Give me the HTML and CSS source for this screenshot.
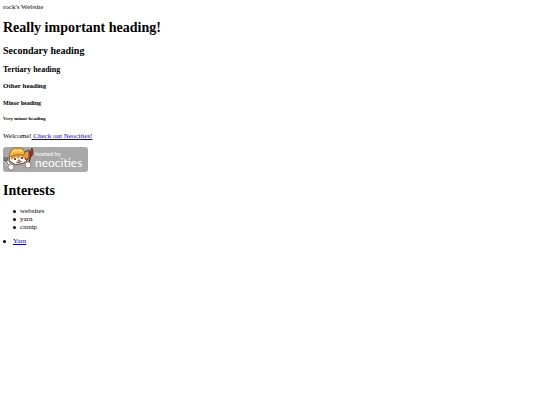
FILE: index.html
```html
<!DOCTYPE html>
<html>
  <head>
    <meta charset="UTF-8">
    <meta name="viewport" content="width=device-width, initial-scale=1">
    <title>rock's Website</title>
    <link rel="stylesheet" href="styles.css">
  </head>
  <body>
    rock's Website
    <h1>Really important heading!</h1>
    <h2>Secondary heading</h2>
    <h3>Tertiary heading</h3>
    <h4>Other heading</h4>
    <h5>Minor heading</h5>
    <h6>Very minor heading</h6>

    <p>Welcome!<a href="#neocities"> Check out Neocities!</a></p>

    <svg class="badge" id="neocities" viewBox="0 0 85 25" role="img" aria-label="Hosted by Neocities">
      <rect width="85" height="25" rx="3" fill="#a9a9a9"/>
      <!-- fork -->
      <path d="M3 14 8 21" stroke="#f4f4f4" stroke-width="3"/>
      <path d="M1 10 2 14 4 14 5 10M3 10 3 14 7 21" fill="none" stroke="#555" stroke-width="1"/>
      <!-- cat -->
      <path d="M7 8Q5 13 8 15 12 19 17 17 24 16 25 10L26 4 20 6Z" fill="#fff" stroke="#69422b" stroke-width="1"/>
      <path d="M20 6 26 3 26 11 23 13Z" fill="#f39a3e" stroke="#5b3a27" stroke-width="1"/>
      <path d="M8 9 15 7 22 8 22 12 18 9 16 12 13 10 8 13Z" fill="#ed9140"/>
      <path d="M7 10Q5 7 8 4 9 0 15 1 21 0 22 7L20 8Q13 6 7 10Z" fill="#f2b83c" stroke="#9b702f" stroke-width="1"/>
      <path d="M9 5Q14 3 20 4M11 2 13 4M16 2 18 5" fill="none" stroke="#ffe18a" stroke-width="1"/>
      <circle cx="12" cy="12" r="1" fill="#2c2522"/>
      <circle cx="19" cy="11" r="1" fill="#2c2522"/>
      <path d="M15 13 17 13 16 14ZM13 15Q16 17 19 14" fill="#6c3428" stroke="#6c3428" stroke-width=".5"/>
      <circle cx="8" cy="20" r="3" fill="#fff" stroke="#876d59" stroke-width=".8"/>
      <!-- brush -->
      <path d="M25 18 28 8" stroke="#6b3529" stroke-width="1.5"/>
      <path d="M27 9Q26 5 29 1 31 5 29 9Z" fill="#a52d2b" stroke="#5b2925" stroke-width=".7"/>
      <circle cx="25" cy="18" r="3" fill="#fff" stroke="#876d59" stroke-width=".8"/>
      <text class="hosted" x="32" y="9">hosted by</text>
      <text class="name" x="32" y="20">neocities</text>
    </svg>

    <h1>Interests</h1>
    <ul>
      <li>websites</li>
      <li>yarn</li>
      <li>catnip</li>
    </ul>
    <ul class="links">
      <li><a href="#yarn">Yarn</a></li>
    </ul>
  </body>
</html>
```
FILE: styles.css
```css
body {
  margin: 3px;
  font: 7px/8px "Liberation Serif", "Times New Roman", serif;
  color: #000;
  background: #fff;
}

/* Headings */
h1 {
  margin: 9px 0 8px;
  font-size: 14px;
  line-height: 16px;
}
h2 {
  margin: 9px 0 8px;
  font-size: 10px;
  line-height: 12px;
}
h3 {
  margin: 8px 0 7px;
  font-size: 8px;
  line-height: 10px;
}
h4 {
  margin: 7px 0;
  font-size: 7px;
  line-height: 8px;
}
h5 {
  margin: 10px 0;
  font-size: 6px;
  line-height: 6px;
}
h6 {
  margin: 10px 0;
  font-size: 5px;
  line-height: 6px;
}

p {
  margin: 7px 0;
}
a {
  color: #0000ee;
}

/* Hosting badge */
.badge {
  display: block;
  width: 85px;
  height: 25px;
  margin-bottom: 11px;
}
.badge text {
  font-family: Lato, sans-serif;
  fill: #fff;
}
.badge .hosted {
  font-size: 6px;
}
.badge .name {
  font-size: 12px;
}

/* Lists */
ul {
  margin: 6px 0;
  padding-left: 10px;
  list-style: none;
}
li {
  display: flex;
  align-items: center;
  gap: 4px;
}
li::before {
  width: 3px;
  height: 3px;
  border-radius: 50%;
  background: #000;
  content: '';
}
.links {
  padding-left: 0;
}
.links li {
  gap: 7px;
}
```
